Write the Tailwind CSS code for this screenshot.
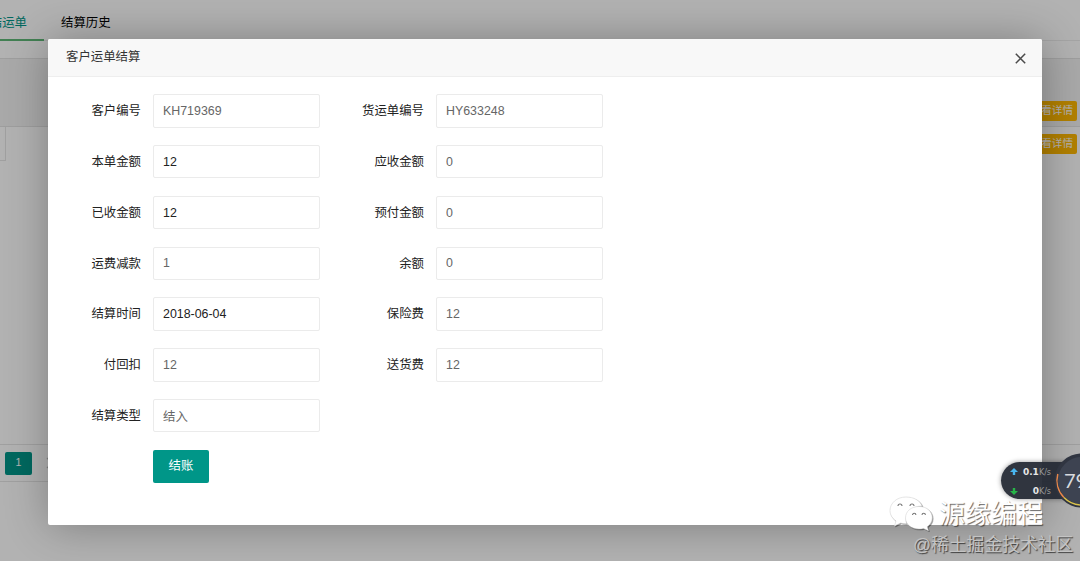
<!DOCTYPE html>
<html lang="zh-CN">
  <head>
    <meta charset="UTF-8" />
    <meta name="viewport" content="width=device-width, initial-scale=1.0" />
    <title>客户运单结算</title>
    <script src="https://cdn.jsdelivr.net/npm/@tailwindcss/browser@4"></script>
  </head>
  <body class="relative h-[561px] w-[1080px] overflow-hidden bg-white font-['Liberation_Sans','Noto_Sans_CJK_SC',sans-serif] text-[12.4px] text-[#222]">
    <!-- Page behind the dialog -->
    <div class="flex h-full flex-col">
      <nav class="flex h-[41px] border-b border-[#ececec]">
        <a class="flex h-[41px] w-11 shrink-0 items-center justify-end border-b-2 border-[#5fb878] pr-[17px] pt-[7px] whitespace-nowrap text-[#009688]">结运单</a>
        <a class="flex items-center pl-[17px] pt-[7px] text-black">结算历史</a>
      </nav>
      <div class="mt-[17px] flex h-[69px] items-center justify-end border-y border-[#e2e2e2] bg-[#f2f2f2] pr-[3px] pt-9">
        <span class="flex h-5 w-14 items-center justify-end rounded-xs bg-[#ffb800] pr-1 text-[10.6px] text-white">查看详情</span>
      </div>
      <div class="flex h-[34px] items-center justify-between pr-[3px]">
        <div class="h-full w-1.5 border-r border-b border-[#e6e6e6]"></div>
        <span class="flex h-5 w-14 items-center justify-end rounded-xs bg-[#ffb800] pr-1 text-[10.6px] text-white">查看详情</span>
      </div>
      <div class="mt-auto mb-[79px] flex h-[38px] items-center gap-3.5 border-y border-[#e6e6e6] pl-[5px]">
        <span class="flex h-[23px] w-[27px] items-center justify-center rounded-xs bg-[#009688] text-[10.6px] text-white">1</span>
        <svg class="h-3 w-3" viewBox="0 0 12 12" fill="none" stroke="#bbb" stroke-width="1.2"><path d="M1 1l5 5-5 5" /></svg>
      </div>
    </div>
    <div class="absolute inset-0 bg-black/30"></div>

    <!-- Dialog -->
    <section class="absolute top-[39px] left-12 flex h-[486px] w-[994px] flex-col rounded-xs bg-white shadow-[1px_1px_44px_rgba(0,0,0,0.3)]">
      <header class="flex h-[38px] shrink-0 items-center justify-between rounded-t-xs border-b border-[#eee] bg-[#f8f8f8] pr-4 pl-[18px] text-[#333]">
        <h1>客户运单结算</h1>
        <svg class="mt-0.5 h-[11px] w-[11px]" viewBox="0 0 11 11" fill="none" stroke="#4a4a4a" stroke-width="1.5"><path d="M.8.8l9.4 9.4M10.2.8L.8 10.2" /></svg>
      </header>
      <form class="grid grid-cols-[93px_167px_92px_167px] auto-rows-[33.5px] items-center gap-x-3 gap-y-[17.3px] pt-[17.2px]">
        <label class="pt-px text-right">客户编号</label>
        <input class="h-full w-full rounded-xs border border-[#ebebeb] px-[9px] text-[#666]" value="KH719369" />
        <label class="pt-px text-right">货运单编号</label>
        <input class="h-full w-full rounded-xs border border-[#ebebeb] px-[9px] text-[#666]" value="HY633248" />

        <label class="pt-px text-right">本单金额</label>
        <input class="h-full w-full rounded-xs border border-[#ebebeb] px-[9px]" value="12" />
        <label class="pt-px text-right">应收金额</label>
        <input class="h-full w-full rounded-xs border border-[#ebebeb] px-[9px] text-[#666]" value="0" />

        <label class="pt-px text-right">已收金额</label>
        <input class="h-full w-full rounded-xs border border-[#ebebeb] px-[9px]" value="12" />
        <label class="pt-px text-right">预付金额</label>
        <input class="h-full w-full rounded-xs border border-[#ebebeb] px-[9px] text-[#666]" value="0" />

        <label class="pt-px text-right">运费减款</label>
        <input class="h-full w-full rounded-xs border border-[#ebebeb] px-[9px] text-[#666]" value="1" />
        <label class="pt-px text-right">余额</label>
        <input class="h-full w-full rounded-xs border border-[#ebebeb] px-[9px] text-[#666]" value="0" />

        <label class="pt-px text-right">结算时间</label>
        <input class="h-full w-full rounded-xs border border-[#ebebeb] px-[9px]" value="2018-06-04" />
        <label class="pt-px text-right">保险费</label>
        <input class="h-full w-full rounded-xs border border-[#ebebeb] px-[9px] text-[#666]" value="12" />

        <label class="pt-px text-right">付回扣</label>
        <input class="h-full w-full rounded-xs border border-[#ebebeb] px-[9px] text-[#666]" value="12" />
        <label class="pt-px text-right">送货费</label>
        <input class="h-full w-full rounded-xs border border-[#ebebeb] px-[9px] text-[#666]" value="12" />

        <label class="pt-px text-right">结算类型</label>
        <input class="h-full w-full rounded-xs border border-[#ebebeb] px-[9px] text-[#666]" value="结入" />

        <button type="button" class="col-start-2 row-start-8 h-full w-14 rounded-xs bg-[#009688] text-white">结账</button>
      </form>
    </section>

    <!-- Watermarks -->
    <div class="absolute top-[494px] left-[889px] flex items-center gap-[5px] text-white">
      <svg class="h-9 w-[45px] drop-shadow-[1px_1px_0.5px_rgba(0,0,0,0.4)]" viewBox="0 0 45 36">
        <path d="M17 2C8 2 1 8 1 15.500c0 4.500 2.500 8 6 10.500L5.500 31l6-3c2 .6 4 1 6 .8C15 20 22 11 33 11 31 5 24 2 17 2z" fill="#fff" stroke="#ccc" stroke-width=".5" />
        <path d="M30 11.500c-8 0-13.500 5-13.500 11.300S22 34 30 34c1.600 0 3-.2 4.500-.6l5 2.400-1.300-4c3-2.200 5-5.300 5-9C43.200 16.500 38 11.500 30 11.500z" fill="#fff" stroke="#ccc" stroke-width=".5" />
        <path d="M9 11a2 2 0 0 1 4 0M21 11a2 2 0 0 1 4 0M23.500 20a1.700 1.700 0 0 1 3.400 0M33 20a1.700 1.700 0 0 1 3.400 0" fill="none" stroke="#777" stroke-width="1.100" />
      </svg>
      <span class="pt-0.5 text-[26px] leading-9 whitespace-nowrap text-shadow-[1px_1px_1px_rgba(0,0,0,0.6)]">源缘编程</span>
    </div>
    <div class="absolute top-[533px] left-[913px] text-[17.8px] leading-6 whitespace-nowrap text-[#c4c4c4] text-shadow-[1px_1px_1px_rgba(0,0,0,0.65)]">@稀土掘金技术社区</div>

    <!-- Network speed widget -->
    <div class="absolute top-[462px] left-[1001px] flex h-[37px] w-[79px] flex-col justify-center gap-1 rounded-l-full bg-[#252a35]/95 pt-0.5 pr-[29px] pl-[9px] font-['DejaVu_Sans',sans-serif] text-[9px] leading-[14px] text-[#e5e5e5] shadow-[0_0_5px_rgba(0,0,0,0.4)]">
      <div class="flex items-center justify-between">
        <svg class="h-2 w-2" viewBox="0 0 8 8" fill="#49b5ee"><path d="M4 0l4 4H5.200v3H2.800V4H0z" /></svg>
        <span class="whitespace-nowrap"><b>0.1</b><span class="text-[8px] text-[#999]">K/s</span></span>
      </div>
      <div class="flex items-center justify-between">
        <svg class="h-2 w-2" viewBox="0 0 8 8" fill="#27b448"><path d="M4 8l4-4H5.200V1H2.800v3H0z" /></svg>
        <span class="whitespace-nowrap"><b>0</b><span class="text-[8px] text-[#999]">K/s</span></span>
      </div>
    </div>
    <svg class="absolute top-[453px] left-[1054px] h-[55px] w-[26px]" viewBox="0 0 26 55">
      <circle cx="27.500" cy="27.500" r="27" fill="#303541" />
      <circle cx="27.500" cy="27.500" r="23.500" fill="#3d4351" />
      <path d="M3.800 21A24.500 24.500 0 0 0 10 44.500" fill="none" stroke="#e8874a" stroke-width="1.500" />
      <path d="M10 44.500A24.500 24.500 0 0 0 27.500 52" fill="none" stroke="#d9c24c" stroke-width="1.500" />
      <text x="10" y="34.500" fill="#d8dade" font-family="Lato, sans-serif" font-size="20" font-weight="400">79</text>
    </svg>
  </body>
</html>
